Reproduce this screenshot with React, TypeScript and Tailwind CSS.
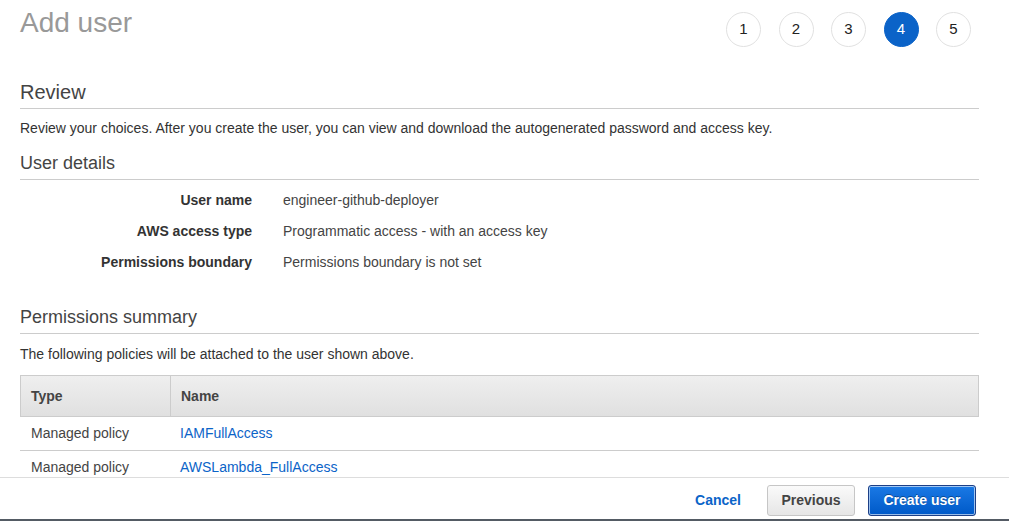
import React from "react";

const steps = [1, 2, 3, 4, 5];

const details = [
  ["User name", "engineer-github-deployer"],
  ["AWS access type", "Programmatic access - with an access key"],
  ["Permissions boundary", "Permissions boundary is not set"],
];

const policies = [
  ["Managed policy", "IAMFullAccess"],
  ["Managed policy", "AWSLambda_FullAccess"],
];

export default function App() {
  return (
    <div
      className="flex h-[521px] w-[1009px] flex-col overflow-hidden bg-white text-[14px] text-[#444]"
      style={{ fontFamily: '"Liberation Sans", Arial, Helvetica, sans-serif' }}
    >
      <div className="flex-1 overflow-hidden pl-[20px] pr-[30px]">
        <div className="flex items-start justify-between">
          <h1 className="mt-[7px] text-[28px] leading-[32px] font-normal text-[#999]">Add user</h1>
          <div className="mt-[12px] mr-[8px] flex gap-[17.5px]">
            {steps.map((s) => (
              <div
                key={s}
                className={
                  s === 4
                    ? "flex h-[35px] w-[35px] items-center justify-center rounded-full border border-[#0b63c8] bg-[#0b63c8] text-[15px] text-white"
                    : "flex h-[35px] w-[35px] items-center justify-center rounded-full border border-[#e1e1e1] bg-white text-[15px] text-[#222]"
                }
              >
                {s}
              </div>
            ))}
          </div>
        </div>

        <h2 className="mt-[33px] border-b border-[#ccc] pb-[4px] text-[20px] leading-[24px] font-normal text-[#444]">
          Review
        </h2>
        <p className="mt-[9px] leading-[20px] text-[#333]">
          Review your choices. After you create the user, you can view and download the autogenerated password and access key.
        </p>

        <h3 className="mt-[14px] border-b border-[#ccc] pb-[5px] text-[18px] leading-[22px] font-normal text-[#444]">
          User details
        </h3>
        <div className="mt-[5px] flex flex-col">
          {details.map(([k, v]) => (
            <div key={k} className="flex h-[31px] items-center">
              <div className="w-[232px] text-right font-bold text-[#333]">{k}</div>
              <div className="ml-[31px] text-[#444]">{v}</div>
            </div>
          ))}
        </div>

        <h3 className="mt-[28px] border-b border-[#ccc] pb-[5px] text-[18px] leading-[22px] font-normal text-[#444]">
          Permissions summary
        </h3>
        <p className="mt-[10px] leading-[20px] text-[#333]">
          The following policies will be attached to the user shown above.
        </p>

        <div className="mt-[11px]">
          <div className="flex h-[42px] border border-[#ccc] bg-gradient-to-b from-[#efefef] to-[#e0e0e0] font-bold text-[#444]">
            <div className="flex w-[150px] items-center border-r border-[#ccc] pl-[10px]">Type</div>
            <div className="flex items-center pl-[10px]">Name</div>
          </div>
          {policies.map(([t, n]) => (
            <div key={n} className="flex h-[34px] items-center border-b border-[#ccc]">
              <div className="w-[150px] pl-[11px] text-[#444]">{t}</div>
              <div className="pl-[10px]">
                <a href="#" className="text-[#0b64c8]">{n}</a>
              </div>
            </div>
          ))}
        </div>
      </div>

      <div className="flex h-[44px] shrink-0 items-center justify-end border-t border-[#ddd] border-b-2 border-b-[#545b64] bg-white pt-[3px] pr-[33px]">
        <a href="#" className="mr-[26px] font-bold text-[#0b64c8]">Cancel</a>
        <button className="mr-[13px] h-[31px] w-[88px] rounded-[3px] border border-[#c6c6c6] bg-gradient-to-b from-[#fafafa] to-[#e6e6e6] font-bold text-[#444]">
          Previous
        </button>
        <button
          className="h-[31px] w-[108px] rounded-[3px] border border-[#1d3f86] bg-gradient-to-b from-[#1a79e5] to-[#0059c8] font-bold text-white shadow-[inset_0_0_0_1px_rgba(255,255,255,0.6)]"
          style={{ textShadow: "0 -1px 0 rgba(0,0,0,0.35)" }}
        >
          Create user
        </button>
      </div>
    </div>
  );
}
